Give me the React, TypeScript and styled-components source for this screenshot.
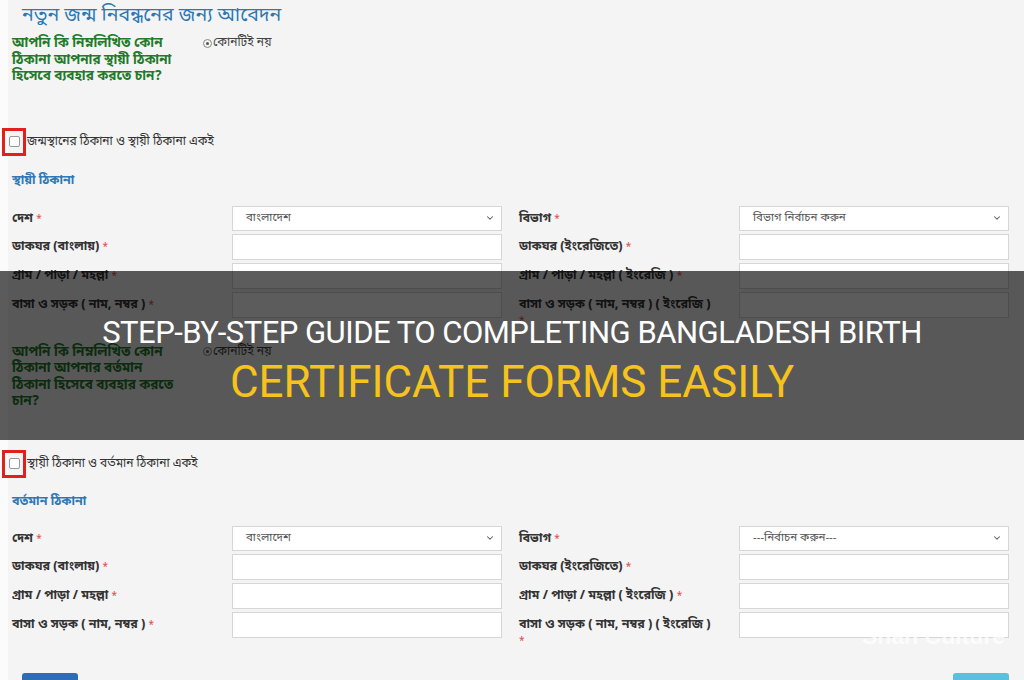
import React from 'react';
import styled, {createGlobalStyle} from 'styled-components';
import {ChevronDown} from 'lucide-react';

const Global = createGlobalStyle`
    body {
        margin: 0;
        font-family: "Noto Sans Bengali", "Noto Sans", "Liberation Sans", sans-serif;
    }
`;

// page

const Page = styled.div`
    position: relative;
    height: 680px;
    overflow: hidden;
    background: linear-gradient(to right, #fbfbfb 8px, #f4f4f4 8px);
`;

const Content = styled.div`
    padding: 4px 15px 0 12px;
`;

const Title = styled.h2`
    margin: 0 0 0 10px;
    font-size: 19.5px;
    line-height: 24px;
    font-weight: normal;
    color: #2b78b2;
`;

const QuestionRow = styled.div<{mt: number}>`
    display: grid;
    grid-template-columns: 191px 1fr;
    margin-top: ${p => p.mt}px;
`;

const Question = styled.div`
    font-size: 13.5px;
    line-height: 16.5px;
    font-weight: bold;
    color: #1f7a2a;
    & span {
        display: block;
        white-space: nowrap;
    }
`;

const RadioLabel = styled.label`
    display: flex;
    align-items: center;
    gap: 1px;
    font-size: 12px;
    color: #444;
    height: 14px;
`;

const Radio = styled.span`
    width: 7px;
    height: 7px;
    border-radius: 50%;
    border: 1px solid #888;
    display: flex;
    align-items: center;
    justify-content: center;
    &::after {
        content: '';
        width: 3px;
        height: 3px;
        border-radius: 50%;
        background: #555;
    }
`;

const CheckRow = styled.div<{mt: number}>`
    display: flex;
    align-items: center;
    margin: ${p => p.mt}px 0 0 -10px;
    font-size: 12px;
    color: #333;
`;

const RedBox = styled.span`
    width: 18px;
    height: 22px;
    border: 3px solid #e0201c;
    display: flex;
    align-items: center;
    justify-content: center;
    margin-right: 1px;
`;

const Check = styled.span`
    width: 9px;
    height: 9px;
    border: 1px solid #999;
    border-radius: 2px;
    background: #fff;
`;

const SectionHead = styled.div<{mt: number}>`
    margin-top: ${p => p.mt}px;
    font-size: 12.5px;
    font-weight: bold;
    color: #3077b5;
`;

const Grid = styled.div<{mt: number}>`
    display: grid;
    grid-template-columns: 1fr 1fr;
    column-gap: 17px;
    row-gap: 3px;
    margin-top: ${p => p.mt}px;
`;

const Field = styled.div`
    display: grid;
    grid-template-columns: 220px 1fr;
    align-items: start;
`;

const Label = styled.div`
    padding: 5px 22px 0 0;
    font-size: 12.5px;
    line-height: 16px;
    font-weight: bold;
    color: #333;
`;

const Star = styled.span`
    color: #e04848;
    font-weight: normal;
    font-size: 10px;
`;

const Input = styled.div`
    height: 24px;
    background: #fff;
    border: 1px solid #d6d6d6;
`;

const Select = styled.div`
    height: 23px;
    background: #fff;
    border: 1px solid #d6d6d6;
    display: flex;
    align-items: center;
    justify-content: space-between;
    padding: 0 6px 0 13px;
    font-size: 11.5px;
    color: #555;
`;

const Buttons = styled.div`
    display: flex;
    justify-content: space-between;
    margin: 23px 0 0 10px;
`;

const Button = styled.span<{bg: string}>`
    width: 56px;
    height: 26px;
    border-radius: 3px;
    background: ${p => p.bg};
`;

// overlay banner

const Banner = styled.div`
    position: absolute;
    left: 0;
    right: 0;
    top: 271px;
    height: 169px;
    background: rgba(0, 0, 0, 0.64);
    display: flex;
    flex-direction: column;
    align-items: center;
    padding-top: 42px;
    box-sizing: border-box;
    font-family: Roboto, "Liberation Sans", sans-serif;
    text-transform: uppercase;
`;

const BannerLine = styled.div<{color: string, size: number, lh: number, ls: number}>`
    color: ${p => p.color};
    font-size: ${p => p.size}px;
    line-height: ${p => p.lh}px;
    letter-spacing: ${p => p.ls}px;
    white-space: nowrap;
`;

const Watermark = styled.div`
    position: absolute;
    left: 862px;
    top: 623px;
    font-family: "Liberation Sans", sans-serif;
    font-weight: bold;
    font-size: 23px;
    color: rgba(255, 255, 255, 0.75);
`;

type FieldDef = {label: string, select?: string};

const rows = (region: string): FieldDef[] => [
    {label: 'দেশ', select: 'বাংলাদেশ'},
    {label: 'বিভাগ', select: region},
    {label: 'ডাকঘর (বাংলায়)'},
    {label: 'ডাকঘর (ইংরেজিতে)'},
    {label: 'গ্রাম / পাড়া / মহল্লা'},
    {label: 'গ্রাম / পাড়া / মহল্লা ( ইংরেজি )'},
    {label: 'বাসা ও সড়ক ( নাম, নম্বর )'},
    {label: 'বাসা ও সড়ক ( নাম, নম্বর ) ( ইংরেজি )'}
];

const AddressGrid = ({region, mt}: {region: string, mt: number}) => <Grid mt={mt}>
    {rows(region).map(f => <Field key={f.label}>
        <Label>{f.label} <Star>*</Star></Label>
        {f.select
            ? <Select>{f.select}<ChevronDown size={10} strokeWidth={2.5} color="#555" /></Select>
            : <Input />}
    </Field>)}
</Grid>;

const AddressQuestion = ({lines, mt}: {lines: string[], mt: number}) => <QuestionRow mt={mt}>
    <Question>{lines.map(l => <span key={l}>{l}</span>)}</Question>
    <RadioLabel><Radio />কোনটিই নয়</RadioLabel>
</QuestionRow>;

export default function App(): React.ReactElement {
    return <Page>
        <Global />
        <Content>
            <Title>নতুন জন্ম নিবন্ধনের জন্য আবেদন</Title>
            <AddressQuestion mt={8} lines={[
                'আপনি কি নিম্নলিখিত কোন',
                'ঠিকানা আপনার স্থায়ী ঠিকানা',
                'হিসেবে ব্যবহার করতে চান?'
            ]} />
            <CheckRow mt={42}><RedBox><Check /></RedBox>জন্মস্থানের ঠিকানা ও স্থায়ী ঠিকানা একই</CheckRow>
            <SectionHead mt={17}>স্থায়ী ঠিকানা</SectionHead>
            <AddressGrid region="বিভাগ নির্বাচন করুন" mt={17} />
            <AddressQuestion mt={15} lines={[
                'আপনি কি নিম্নলিখিত কোন',
                'ঠিকানা আপনার বর্তমান',
                'ঠিকানা হিসেবে ব্যবহার করতে',
                'চান?'
            ]} />
            <CheckRow mt={39}><RedBox><Check /></RedBox>স্থায়ী ঠিকানা ও বর্তমান ঠিকানা একই</CheckRow>
            <SectionHead mt={16}>বর্তমান ঠিকানা</SectionHead>
            <AddressGrid region="---নির্বাচন করুন---" mt={16} />
            <Buttons>
                <Button bg="#2d6db5" />
                <Button bg="#5bc0de" />
            </Buttons>
        </Content>
        <Banner>
            <BannerLine color="#ffffff" size={31} lh={40} ls={-0.5}>Step-by-Step Guide to Completing Bangladesh Birth</BannerLine>
            <BannerLine color="#f6c21c" size={44} lh={58} ls={0}>Certificate Forms Easily</BannerLine>
        </Banner>
        <Watermark>Shah Culture</Watermark>
    </Page>;
}
